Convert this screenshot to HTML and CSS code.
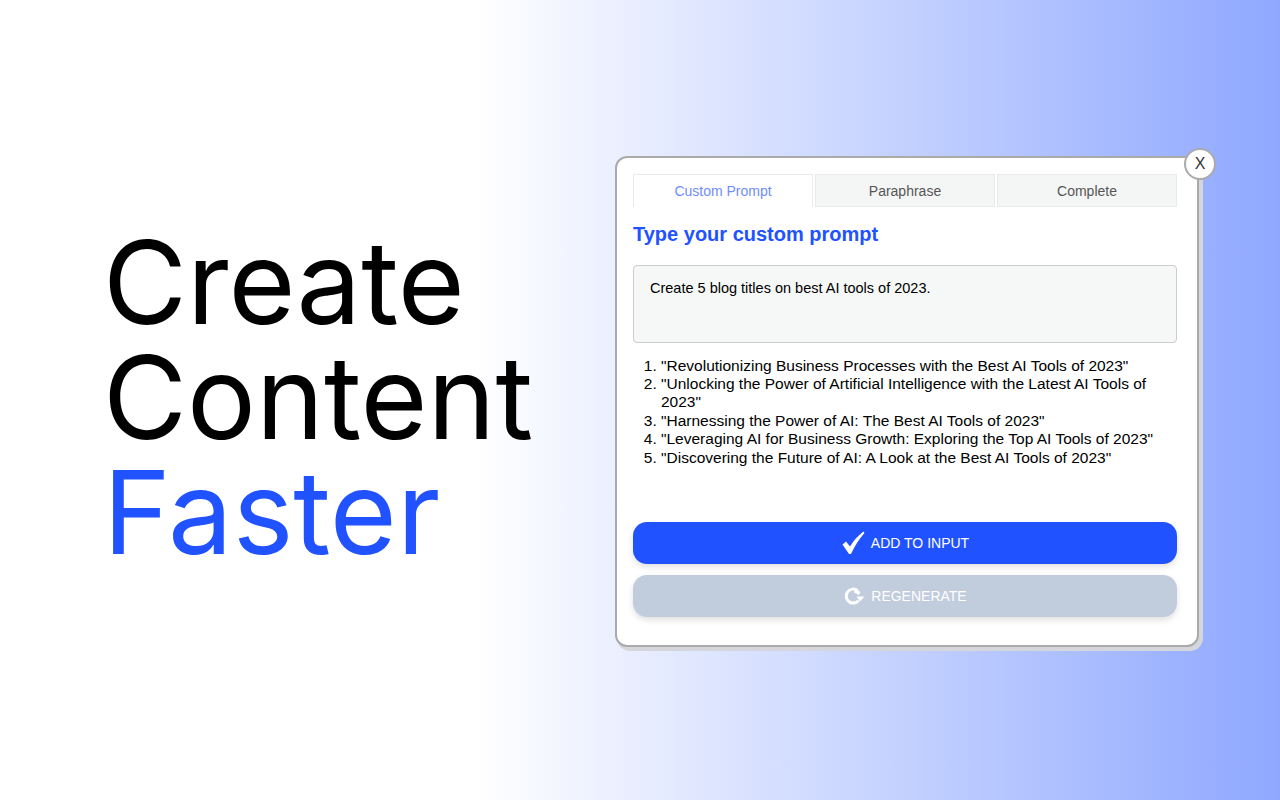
FILE: index.html
```html
<!DOCTYPE html>
<html lang="en">
<head>
<meta charset="utf-8">
<title>Create Content Faster</title>
<link rel="stylesheet" href="styles.css">
</head>
<body>
<main class="page">
  <h1 class="headline">Create<br>Content<br><span class="accent">Faster</span></h1>
  <section class="modal">
    <button class="close">X</button>
    <div class="tabs">
      <div class="tab active">Custom Prompt</div>
      <div class="tab">Paraphrase</div>
      <div class="tab">Complete</div>
    </div>
    <h2 class="title">Type your custom prompt</h2>
    <div class="prompt">Create 5 blog titles on best AI tools of 2023.</div>
    <ol class="results">
      <li>"Revolutionizing Business Processes with the Best AI Tools of 2023"</li>
      <li>"Unlocking the Power of Artificial Intelligence with the Latest AI Tools of 2023"</li>
      <li>"Harnessing the Power of AI: The Best AI Tools of 2023"</li>
      <li>"Leveraging AI for Business Growth: Exploring the Top AI Tools of 2023"</li>
      <li>"Discovering the Future of AI: A Look at the Best AI Tools of 2023"</li>
    </ol>
    <button class="btn primary">
      <svg class="icon-check" viewBox="0 0 24 24"><path d="M1.5 13.5 L5 10.5 L9 15.5 Q14 7 22.5 0.5 L23.5 2 Q15.5 11 10 23 L8 23 Z" fill="#fff"/></svg>
      ADD TO INPUT
    </button>
    <button class="btn muted">
      <svg class="icon-redo" viewBox="0 0 22 20"><path d="M15.6 14.6 A7 7 0 1 1 14.6 4.6" fill="none" stroke="#fff" stroke-width="3"/><path d="M13.5 10.5 L21.5 10.5 L17 15.5 Z M12 2.5 L17.5 6 L16 9 L11 6.5 Z" fill="#fff"/></svg>
      REGENERATE
    </button>
  </section>
</main>
</body>
</html>
```
FILE: styles.css
```css
* { box-sizing: border-box; }
html, body { margin: 0; height: 100%; }
.page {
  width: 1280px;
  height: 800px;
  display: flex;
  align-items: center;
  padding-left: 103px;
  background: linear-gradient(90deg, #fff 0%, #fff 37%, #8fa8ff 100%);
  overflow: hidden;
}
.headline {
  width: 512px;
  margin: 0 0 6px;
  font-family: Inter, sans-serif;
  font-weight: 400;
  font-size: 115px;
  line-height: 115px;
  color: #000;
}
.accent { color: #2152ff; }
.modal {
  position: relative;
  width: 584px;
  height: 491px;
  margin-top: 2px;
  padding: 16px 20px 0 16px;
  background: #fff;
  border: 2px solid #aaa;
  border-radius: 12px;
  box-shadow: 3px 3px 0 1px #d4d6dc;
  font-family: "Liberation Sans", Arial, sans-serif;
}
.close {
  position: absolute;
  top: -10px;
  right: -19px;
  width: 32px;
  height: 32px;
  padding: 0;
  border: 2px solid #aaa;
  border-radius: 50%;
  background: #fff;
  color: #333;
  font: 16px "Liberation Sans", Arial, sans-serif;
}
.tabs { display: flex; gap: 2px; }
.tab {
  flex: 1;
  height: 33px;
  border: 1px solid #e9ebea;
  background: #f4f5f5;
  color: #555;
  font-size: 14px;
  line-height: 32px;
  text-align: center;
}
.tab.active { background: #fff; color: #6f8dfb; border-bottom: 0; }
.title {
  margin: 15px 0 18px;
  color: #2152ff;
  font-size: 20px;
  font-weight: 700;
  line-height: 25px;
}
.prompt {
  height: 78px;
  padding: 13px 16px;
  background: #f6f7f7;
  border: 1px solid #ccc;
  border-radius: 4px;
  color: #000;
  font-size: 14.5px;
  line-height: 18px;
}
.results {
  height: 165px;
  margin: 14px 0 0;
  padding: 0 10px 0 28px;
  font-size: 15.5px;
  line-height: 18.4px;
  color: #000;
}
.results li { padding-left: 0; }
.btn {
  display: flex;
  align-items: center;
  justify-content: center;
  gap: 6px;
  width: 100%;
  height: 42px;
  border: 0;
  border-radius: 14px;
  color: #fff;
  font: 14px "Liberation Sans", Arial, sans-serif;
  box-shadow: 0 3px 6px rgba(0, 0, 0, .12);
}
.primary { background: #2152ff; margin-bottom: 11px; }
.muted { background: #c1ccdd; }
.icon-check { width: 24px; height: 24px; }
.icon-redo { width: 22px; height: 20px; }
```
